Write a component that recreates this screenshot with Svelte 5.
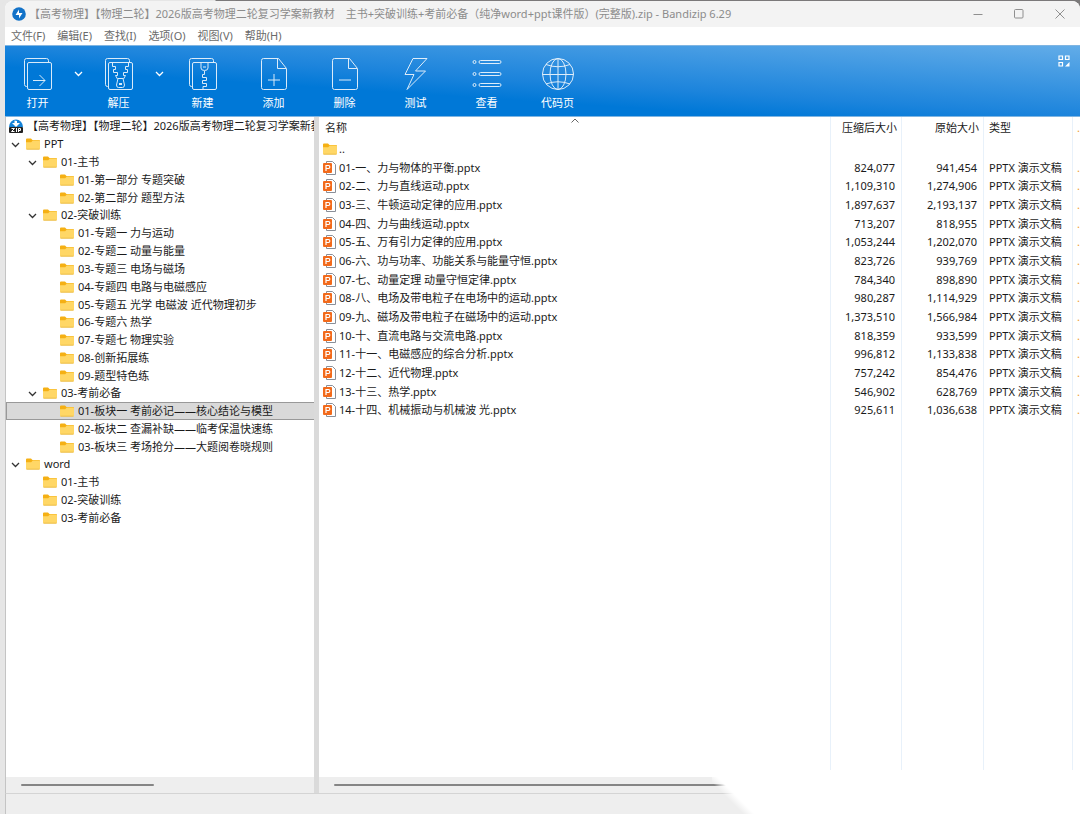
<script lang="ts">
  type TreeNode = { name: string; children?: TreeNode[] }
  type FileRow = { name: string; packed: string; size: string }

  const archive = '【高考物理】【物理二轮】2026版高考物理二轮复习学案新教材'
  const title = `${archive}\u3000主书+突破训练+考前必备（纯净word+ppt课件版）(完整版).zip - Bandizip 6.29`
  const menus = ['文件(F)', '编辑(E)', '查找(I)', '选项(O)', '视图(V)', '帮助(H)']

  const tools = [
    { id: 'open', label: '打开', drop: true },
    { id: 'extract', label: '解压', drop: true },
    { id: 'new', label: '新建' },
    { id: 'add', label: '添加' },
    { id: 'delete', label: '删除' },
    { id: 'test', label: '测试' },
    { id: 'view', label: '查看' },
    { id: 'codepage', label: '代码页' },
  ]

  const tree: TreeNode[] = [
    {
      name: 'PPT',
      children: [
        { name: '01-主书', children: [{ name: '01-第一部分 专题突破' }, { name: '02-第二部分 题型方法' }] },
        {
          name: '02-突破训练',
          children: [
            { name: '01-专题一 力与运动' },
            { name: '02-专题二 动量与能量' },
            { name: '03-专题三 电场与磁场' },
            { name: '04-专题四 电路与电磁感应' },
            { name: '05-专题五 光学 电磁波 近代物理初步' },
            { name: '06-专题六 热学' },
            { name: '07-专题七 物理实验' },
            { name: '08-创新拓展练' },
            { name: '09-题型特色练' },
          ],
        },
        {
          name: '03-考前必备',
          children: [
            { name: '01-板块一 考前必记——核心结论与模型' },
            { name: '02-板块二 查漏补缺——临考保温快速练' },
            { name: '03-板块三 考场抢分——大题阅卷晓规则' },
          ],
        },
      ],
    },
    { name: 'word', children: [{ name: '01-主书' }, { name: '02-突破训练' }, { name: '03-考前必备' }] },
  ]

  const files: FileRow[] = [
    { name: '01-一、力与物体的平衡.pptx', packed: '824,077', size: '941,454' },
    { name: '02-二、力与直线运动.pptx', packed: '1,109,310', size: '1,274,906' },
    { name: '03-三、牛顿运动定律的应用.pptx', packed: '1,897,637', size: '2,193,137' },
    { name: '04-四、力与曲线运动.pptx', packed: '713,207', size: '818,955' },
    { name: '05-五、万有引力定律的应用.pptx', packed: '1,053,244', size: '1,202,070' },
    { name: '06-六、功与功率、功能关系与能量守恒.pptx', packed: '823,726', size: '939,769' },
    { name: '07-七、动量定理 动量守恒定律.pptx', packed: '784,340', size: '898,890' },
    { name: '08-八、电场及带电粒子在电场中的运动.pptx', packed: '980,287', size: '1,114,929' },
    { name: '09-九、磁场及带电粒子在磁场中的运动.pptx', packed: '1,373,510', size: '1,566,984' },
    { name: '10-十、直流电路与交流电路.pptx', packed: '818,359', size: '933,599' },
    { name: '11-十一、电磁感应的综合分析.pptx', packed: '996,812', size: '1,133,838' },
    { name: '12-十二、近代物理.pptx', packed: '757,242', size: '854,476' },
    { name: '13-十三、热学.pptx', packed: '546,902', size: '628,769' },
    { name: '14-十四、机械振动与机械波 光.pptx', packed: '925,611', size: '1,036,638' },
  ]

  let selected = $state('01-板块一 考前必记——核心结论与模型')
  let closed = $state<string[]>([])

  function toggle(name: string) {
    closed = closed.includes(name) ? closed.filter((n) => n !== name) : [...closed, name]
  }
</script>

{#snippet folder()}
  <svg class="folder" width="14" height="12" viewBox="0 0 14 12" aria-hidden="true">
    <path d="M0 1.5Q0 .5 1 .5H5L6.5 2H13Q14 2 14 3V6H0Z" fill="#f5b014" />
    <path d="M0 4.2H5.2L6.8 2.6H13Q14 2.6 14 3.6V10.5Q14 11.5 13 11.5H1Q0 11.5 0 10.5Z" fill="#ffd766" />
    <path d="M.5 11.2H13.5" stroke="#e9b640" stroke-width=".8" />
  </svg>
{/snippet}

{#snippet chevron()}
  <svg width="9" height="6" viewBox="0 0 9 6" fill="none" stroke="currentColor" stroke-width="1.3" aria-hidden="true">
    <path d="M1 1L4.5 4.5L8 1" />
  </svg>
{/snippet}

{#snippet toolIcon(id: string)}
  <svg width="32" height="34" viewBox="0 0 32 34" fill="none" stroke="#fff" stroke-width="1" aria-hidden="true">
    {#if id === 'open' || id === 'extract' || id === 'new'}
      <path d="M5.500 29.500H4.500Q2.500 29.500 2.500 27.500V3.500Q2.500 1.500 4.500 1.500H24.500Q26.500 1.500 26.500 3.500V5" />
      <rect x="5.500" y="5.500" width="24" height="27" rx="1.500" />
    {/if}
    {#if id === 'open'}
      <path d="M11 23.500H23M17.500 18L23 23.500L17.500 29" />
    {:else if id === 'extract'}
      <path d="M9.500 5.500V9.500H12.500V12.500H10.500V15.500H14.500V18.500H12.500L14.500 22M25.500 5.500V9.500H22.500V12.500H24.500V15.500H20.500V18.500H22.500L20.500 22" />
      <path d="M15 21.500H20L21.500 28Q21.500 30.500 19.500 30.500H15.500Q13.500 30.500 13.500 28Z" />
      <path d="M16 27H19" stroke-width="2" />
    {:else if id === 'new'}
      <path d="M14 6V11Q14 13.500 17.500 13.500Q21 13.500 21 11V6M16 10H19M17.500 14V17.500H15.500V20.500H19.500V23.500H15.500V26.500H19.500V29.500H16V32" />
    {:else if id === 'add' || id === 'delete'}
      <path d="M20.500 1.500H5.500Q3.500 1.500 3.500 3.500V30.500Q3.500 32.500 5.500 32.500H26.500Q28.500 32.500 28.500 30.500V11.500ZM19.500 2V11.500H28" />
      <path d={id === 'add' ? 'M16 17V29M10 23H22' : 'M10 23H22'} />
    {:else if id === 'test'}
      <path d="M13 1.500H27L15.500 14H25.500L7 32.500L14 17.500H5Z" stroke-linejoin="round" />
    {:else if id === 'view'}
      {#each [5, 17, 28] as y}
        <circle cx="3.500" cy={y} r="1.500" />
        <rect x="8" y={y - 1.5} width="22" height="3" rx="1.500" />
      {/each}
    {:else}
      <circle cx="16" cy="17" r="15.500" />
      <ellipse cx="16" cy="17" rx="8" ry="15.500" />
      <path d="M16 1.500V32.500M.5 17.500H31.500M4 7.500Q16 12 28 7.500M4 27Q16 22.500 28 27" />
    {/if}
  </svg>
{/snippet}

{#snippet branch(nodes: TreeNode[], depth: number)}
  <ul>
    {#each nodes as node}
      <li>
        <div class="node" class:selected={node.name === selected} style="padding-left: {depth * 17 + 3}px">
          {#if node.children}
            <button class="twisty" aria-label="展开 {node.name}" onclick={() => toggle(node.name)}>
              {@render chevron()}
            </button>
          {:else}
            <span class="twisty"></span>
          {/if}
          <button class="node-name" onclick={() => (selected = node.name)}>
            {@render folder()}
            {node.name}
          </button>
        </div>
        {#if node.children && !closed.includes(node.name)}
          {@render branch(node.children, depth + 1)}
        {/if}
      </li>
    {/each}
  </ul>
{/snippet}

<div class="desktop">
  <div class="window">
    <header class="titlebar">
      <svg width="14" height="14" viewBox="0 0 14 14" aria-hidden="true">
        <circle cx="7" cy="7" r="6.800" fill="#1272c8" />
        <path d="M7 2.500V6H10.500L7 11.500V8H3.500Z" fill="#fff" />
      </svg>
      <h1>{title}</h1>
      <div class="caption">
        <button aria-label="最小化">
          <svg width="10" height="10" viewBox="0 0 10 10"><path d="M.5 5.500H9.500" /></svg>
        </button>
        <button aria-label="最大化">
          <svg width="10" height="10" viewBox="0 0 10 10"><rect x=".5" y=".5" width="8.500" height="8.500" rx="1" /></svg>
        </button>
        <button aria-label="关闭">
          <svg width="10" height="10" viewBox="0 0 10 10"><path d="M.5 .5L9.500 9.500M9.500 .5L.5 9.500" /></svg>
        </button>
      </div>
    </header>

    <nav class="menubar">
      {#each menus as menu}
        <button>{menu}</button>
      {/each}
    </nav>

    <div class="toolbar">
      {#each tools as tool}
        <button class="tool" class:split={tool.drop}>
          {@render toolIcon(tool.id)}
          {tool.label}
        </button>
        {#if tool.drop}
          <button class="drop" aria-label="{tool.label}选项">{@render chevron()}</button>
        {/if}
      {/each}
      <button class="layout" aria-label="布局">
        <svg width="12" height="12" viewBox="0 0 12 12" fill="none" stroke="#fff" stroke-width="1.200">
          <path d="M1 1H4.500V4.500H1ZM7.500 1H11V4.500H7.500ZM1 7.500H4.500V11H1Z" />
          <path d="M11.500 7V11.500H7Z" fill="#fff" stroke="none" />
        </svg>
      </button>
    </div>

    <main>
      <aside>
        <div class="tree">
          <div class="root">
            <svg width="16" height="16" viewBox="0 0 16 16" aria-hidden="true">
              <path d="M1 9A7 7.500 0 0 1 15 9Z" fill="#1583d8" />
              <path d="M6.500 2.500L9 3V5H12L8 9L4 5H6.500Z" fill="#fff" />
              <rect x="1" y="9" width="14" height="6" rx="1" fill="#222" />
              <path d="M3.500 10.500H6.500L3.500 13.500H6.500M8.500 10V14M10.500 14V10.500H12.500V12.500H10.500" fill="none" stroke="#fff" />
            </svg>
            <span>{archive}</span>
          </div>
          {@render branch(tree, 0)}
        </div>
        <div class="scrollbar"><span class="thumb short"></span></div>
      </aside>

      <section>
        <div class="list">
          <table>
            <colgroup>
              <col />
              <col class="packed" />
              <col class="size" />
              <col class="type" />
              <col class="rest" />
            </colgroup>
            <thead>
              <tr>
                <th class="name">
                  名称
                  <svg class="sort" width="8" height="5" viewBox="0 0 8 5" fill="none" stroke="#666"><path d="M.5 4.500L4 1L7.500 4.500" /></svg>
                </th>
                <th class="num">压缩后大小</th>
                <th class="num">原始大小</th>
                <th>类型</th>
                <th class="cut">.</th>
              </tr>
            </thead>
            <tbody>
              <tr>
                <td class="name"><span class="file">{@render folder()}..</span></td>
                <td></td>
                <td></td>
                <td></td>
                <td></td>
              </tr>
              {#each files as file}
                <tr>
                  <td class="name">
                    <span class="file">
                      <svg width="14" height="14" viewBox="0 0 14 14" aria-hidden="true">
                        <path d="M3.500 .5H9.500L12.500 3.500V13.500H3.500Z" fill="#fff" stroke="#8a8f98" />
                        <rect x="0" y="2" width="9" height="10" rx="1" fill="#f26a1b" />
                        <path d="M3 10V4.500H5.500Q6.800 4.500 6.800 6T5.500 7.500H3" fill="none" stroke="#fff" stroke-width="1.200" />
                      </svg>
                      {file.name}
                    </span>
                  </td>
                  <td class="num">{file.packed}</td>
                  <td class="num">{file.size}</td>
                  <td>PPTX 演示文稿</td>
                  <td class="cut">.</td>
                </tr>
              {/each}
            </tbody>
          </table>
          <div class="rules"><i></i><i></i><i></i><i></i></div>
        </div>
        <div class="scrollbar"><span class="thumb"></span></div>
      </section>
    </main>
    <footer></footer>
  </div>
  <div class="fade"></div>
</div>

<style>
  :global(body) {
    background: #fff;
  }

  .desktop {
    position: relative;
    box-sizing: border-box;
    min-height: 100vh;
    padding: 1px 0 0 5px;
    display: flex;
    overflow: hidden;
    background: linear-gradient(to right, #e6e6e6 215px, #7b797a 216px);
    font: 11px/18px 'Noto Sans', 'Noto Sans CJK SC', sans-serif;
    color: #1a1a1a;
  }

  .window {
    flex: 1;
    min-width: 0;
    display: flex;
    flex-direction: column;
    border-radius: 8px 8px 0 0;
    box-shadow: -5px 0 0 #e6e6e6;
    background: #fff;
    overflow: hidden;
  }

  button {
    padding: 0;
    border: 0;
    background: none;
    font: inherit;
    color: inherit;
    white-space: nowrap;
  }

  .titlebar {
    display: flex;
    align-items: center;
    height: 26px;
    padding-left: 7px;
    background: #f3f3f3;
    color: #8c8c8c;
  }

  .titlebar h1 {
    flex: 1;
    min-width: 0;
    margin: 0 0 0 3px;
    font-size: 11px;
    font-weight: 400;
    white-space: nowrap;
    overflow: hidden;
  }

  .caption {
    display: flex;
  }

  .caption button {
    width: 41px;
    height: 26px;
    display: grid;
    place-items: center;
  }

  .caption svg {
    fill: none;
    stroke: #8f8f8f;
  }

  .menubar {
    display: flex;
    gap: 12px;
    height: 18px;
    padding-left: 6px;
    color: #6a6a6a;
  }

  .toolbar {
    display: flex;
    height: 70px;
    border-top: 1px solid #7fb5e2;
    border-bottom: 1px solid #7fb5e2;
    background: linear-gradient(to bottom left, #62ace8, #1c84dc 50%, #0078d7 65%);
    color: #fff;
  }

  .tool {
    width: 71px;
    padding-top: 11px;
    display: flex;
    flex-direction: column;
    align-items: center;
    gap: 3px;
  }

  .tool svg {
    opacity: 0.85;
  }

  .tool.split {
    width: 65px;
  }

  .drop {
    width: 16px;
    padding-bottom: 16px;
  }

  .layout {
    align-self: flex-start;
    margin: 9px 10px 0 auto;
    line-height: 12px;
  }

  main {
    flex: 1;
    display: flex;
    min-height: 0;
  }

  aside {
    flex: none;
    width: 308px;
    display: flex;
    flex-direction: column;
    border-left: 1px solid #c4c4c4;
    border-right: 5px solid #dadada;
  }

  .tree {
    flex: 1;
    overflow: hidden;
    white-space: nowrap;
  }

  .tree ul {
    margin: 0;
    padding: 0;
    list-style: none;
  }

  .tree ul ul ul {
    margin-bottom: -1px;
  }

  .root,
  .node,
  .node-name,
  .file {
    display: flex;
    align-items: center;
  }

  .root {
    gap: 3px;
    height: 18px;
    padding-left: 2px;
  }

  .root svg {
    flex: none;
  }

  .root span {
    overflow: hidden;
  }

  .node {
    box-sizing: border-box;
    height: 18px;
  }

  li:nth-child(5n) > .node {
    height: 17px;
  }

  .node.selected {
    background: #d9d9d9;
    box-shadow: inset 1px 1px #999, inset 0 -1px #999;
  }

  .twisty {
    width: 13px;
    margin-right: 4px;
    line-height: 8px;
    text-align: center;
    color: #333;
  }

  .node-name {
    gap: 4px;
  }

  .folder {
    flex: none;
  }

  .scrollbar {
    height: 16px;
    padding: 0 15px;
    display: flex;
    align-items: center;
    background: #eee;
  }

  .thumb {
    flex: 1;
    height: 2px;
    border-radius: 1px;
    background: #858585;
  }

  .thumb.short {
    flex: none;
    width: 133px;
  }

  section {
    flex: 1;
    min-width: 0;
    display: flex;
    flex-direction: column;
  }

  .list {
    flex: 1;
    position: relative;
  }

  table {
    width: 100%;
    table-layout: fixed;
    border-collapse: collapse;
  }

  .packed {
    width: 71px;
  }

  .size {
    width: 82px;
  }

  .type {
    width: 89px;
  }

  .rest {
    width: 8px;
  }

  th,
  td {
    padding: 0 0 0 6px;
    font-weight: 400;
    text-align: left;
    white-space: nowrap;
    overflow: hidden;
  }

  th {
    position: relative;
    height: 22px;
  }

  td.name {
    padding-left: 4px;
  }

  tbody tr {
    height: 19px;
  }

  tbody tr:nth-child(3n) {
    height: 18px;
  }

  th.num {
    padding: 0 4px 0 0;
    text-align: right;
  }

  td.num {
    padding: 0 6px 0 0;
    text-align: right;
  }

  th.cut,
  td.cut {
    padding-left: 5px;
    color: #f0a030;
  }

  .file {
    gap: 2px;
  }

  .sort {
    position: absolute;
    top: 1px;
    left: 50%;
    margin-left: -4px;
  }

  .rules {
    position: absolute;
    inset: 0 7px 0 auto;
    display: flex;
    pointer-events: none;
  }

  .rules i {
    border-left: 1px solid #e8f1fa;
  }

  .rules i:nth-child(1) {
    width: 70px;
  }

  .rules i:nth-child(2) {
    width: 81px;
  }

  .rules i:nth-child(3) {
    width: 88px;
  }

  footer {
    height: 20px;
    border-top: 1px solid #d4d4d4;
    border-left: 1px solid #c4c4c4;
    background: #eee;
  }

  /* slanted white sweep over the lower right corner */
  .fade {
    position: absolute;
    right: 0;
    bottom: 0;
    left: 712px;
    height: 44px;
    background: linear-gradient(45deg, transparent 22px, #fff 30px);
  }
</style>
